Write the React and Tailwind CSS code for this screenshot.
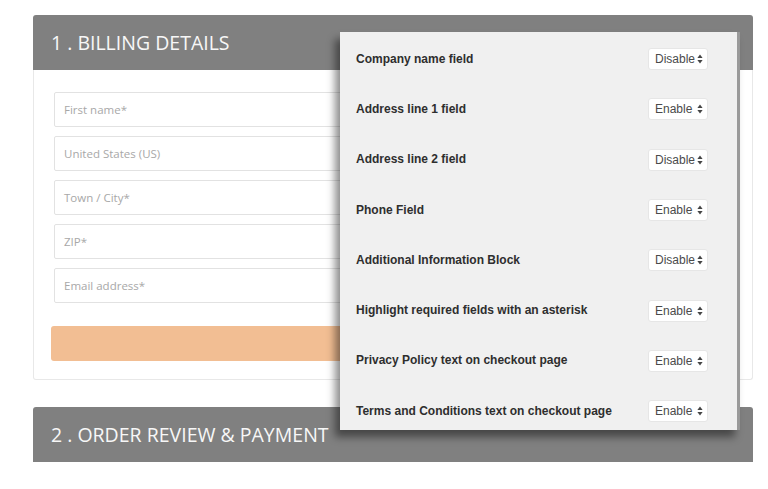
import React from "react";

const rows = [
  ["Company name field", "Disable"],
  ["Address line 1 field", "Enable"],
  ["Address line 2 field", "Disable"],
  ["Phone Field", "Enable"],
  ["Additional Information Block", "Disable"],
  ["Highlight required fields with an asterisk", "Enable"],
  ["Privacy Policy text on checkout page", "Enable"],
  ["Terms and Conditions text on checkout page", "Enable"],
];

const fields = ["First name*", "United States (US)", "Town / City*", "ZIP*", "Email address*"];

function Arrows() {
  return (
    <svg width="6" height="10" viewBox="0 0 6 10" className="shrink-0">
      <path d="M3 0.5 L5.6 4 L0.4 4 Z" fill="#444" />
      <path d="M3 9.5 L5.6 6 L0.4 6 Z" fill="#444" />
    </svg>
  );
}

export default function App() {
  return (
    <div className="relative w-[768px] h-[489px] bg-white overflow-hidden" style={{ fontFamily: '"Open Sans", sans-serif' }}>
      <div className="flex flex-col pt-[15px] pl-[33px] w-[753px]">
        <div className="flex flex-col">
          <div className="h-[55px] bg-[#808080] rounded-t-[3px] flex items-center pl-[18px]">
            <span className="text-[19.5px] text-[#f7f7f7]">1 . BILLING DETAILS</span>
          </div>
          <div className="border border-t-0 border-[#e8e8e8] rounded-b-[3px] h-[310px] flex flex-col pl-[20px] pr-[20px] pt-[22px]">
            <div className="flex flex-col gap-[9px]">
              {fields.map((f) => (
                <div key={f} className="h-[35px] border border-[#e2e2e2] rounded-[2px] flex items-center pl-[9px] text-[11.5px] text-[#a8a8a8]">
                  {f}
                </div>
              ))}
            </div>
            <div className="mt-[23px] -ml-[3px] h-[35px] bg-[#f2be93] rounded-[3px]" />
          </div>
        </div>
        <div className="mt-[27px] h-[55px] bg-[#808080] rounded-t-[3px] flex items-center pl-[18px]">
          <span className="text-[19.5px] text-[#f7f7f7]">2 . ORDER REVIEW &amp; PAYMENT</span>
        </div>
      </div>

      <div
        className="absolute left-[340px] top-[32px] w-[400px] h-[398px] bg-[#f0f0f0] border-r-[3px] border-[#9a9a9a] flex flex-col pt-[2px] pl-[16px] pr-[29px] overflow-hidden"
        style={{ boxShadow: "-5px 7px 8px rgba(0,0,0,0.45)", fontFamily: '"Liberation Sans", Arial, sans-serif' }}
      >
        {rows.map(([label, val]) => (
          <div key={label} className="h-[50.3px] shrink-0 flex items-center justify-between">
            <span className="text-[12px] font-bold text-[#2e2e2e] -mt-[1px]">{label}</span>
            <div className="w-[60px] h-[22px] bg-white rounded-[3px] border border-[#e6e6e6] flex items-center justify-between pl-[6px] pr-[4px] text-[12px] text-[#4a4a4a]">
              <span>{val}</span>
              <Arrows />
            </div>
          </div>
        ))}
      </div>
    </div>
  );
}
